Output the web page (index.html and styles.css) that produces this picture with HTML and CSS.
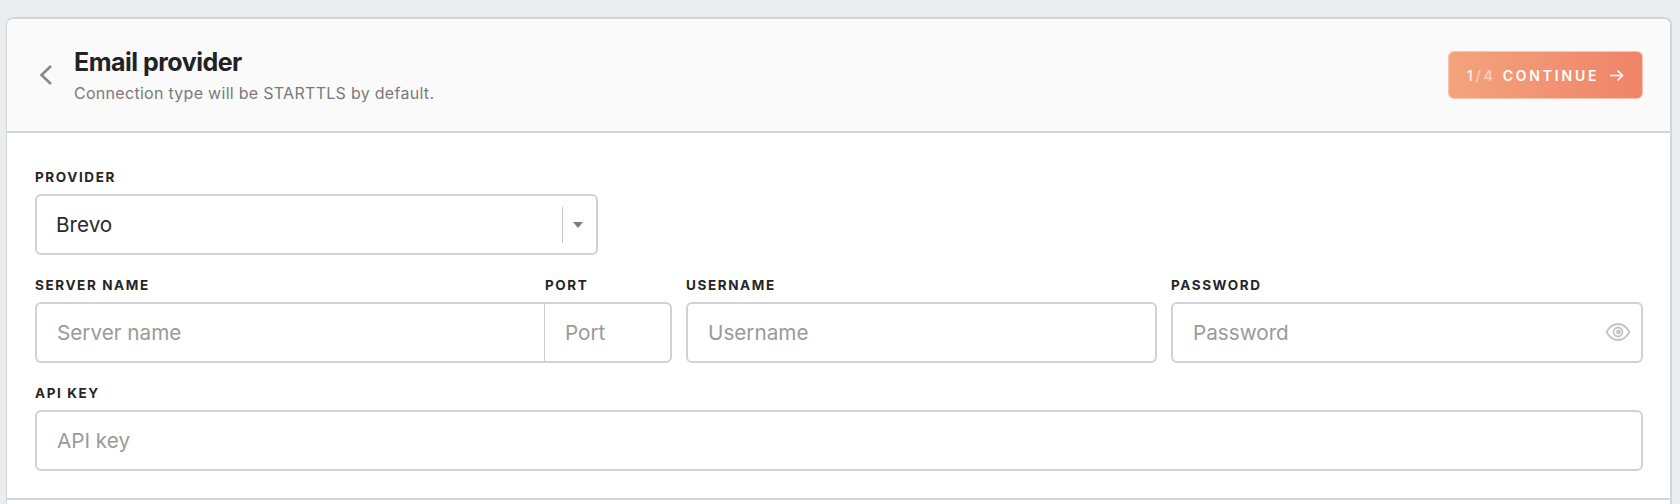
FILE: index.html
```html
<!DOCTYPE html>
<html lang="en">
<head>
<meta charset="utf-8">
<title>Email provider</title>
<link rel="stylesheet" href="styles.css">
</head>
<body>
<main class="card">
  <header class="head">
    <button class="back" type="button" aria-label="Back">
      <svg width="14" height="20" viewBox="0 0 14 20" fill="none"><path d="M12 1 L2.500 10 L12 19" stroke="#888" stroke-width="2.600"/></svg>
    </button>
    <div class="titles">
      <h1 class="title">Email provider</h1>
      <p class="sub">Connection type will be STARTTLS by default.</p>
    </div>
    <button class="cta" type="button">
      <span class="step">1<span class="dim">/4</span></span>
      <span class="cta-text">CONTINUE</span>
      <svg class="arrow" width="15" height="13" viewBox="0 0 15 13" fill="none"><path d="M1 6.500H13.500M8.500 1.500 13.500 6.500 8.500 11.500" stroke="#fff" stroke-width="1.600"/></svg>
    </button>
  </header>
  <form class="form">
    <div class="field provider">
      <label class="label">PROVIDER</label>
      <div class="box select">
        <span class="value">Brevo</span>
        <span class="sep"></span>
        <span class="caret"></span>
      </div>
    </div>
    <div class="row">
      <div class="pair">
        <div class="field">
          <label class="label">SERVER NAME</label>
          <input class="box input joined-l" placeholder="Server name">
        </div>
        <div class="field">
          <label class="label port-label">PORT</label>
          <input class="box input joined-r" placeholder="Port">
        </div>
      </div>
      <div class="field">
        <label class="label">USERNAME</label>
        <input class="box input" placeholder="Username">
      </div>
      <div class="field">
        <label class="label">PASSWORD</label>
        <div class="pw">
          <input class="box input" placeholder="Password">
          <svg class="eye" width="26" height="20" viewBox="0 0 26 20" fill="none"><path d="M1.500 10C4.500 4.800 8.500 2 13 2s8.500 2.800 11.500 8C21.500 15.200 17.500 18 13 18S4.500 15.200 1.500 10Z" stroke="#c4c4c4" stroke-width="1.800"/><circle cx="13" cy="10" r="4.500" stroke="#c4c4c4" stroke-width="1.800"/><circle cx="13.500" cy="10" r="2.400" fill="#c4c4c4"/></svg>
        </div>
      </div>
    </div>
    <div class="field">
      <label class="label">API KEY</label>
      <input class="box input" placeholder="API key">
    </div>
  </form>
  <div class="rule"></div>
</main>
</body>
</html>
```
FILE: styles.css
```css
* { box-sizing: border-box; }
html, body { margin: 0; height: 504px; overflow: hidden; }
body {
  background: #e9edf0;
  padding: 17px 8px 0 6px;
  font-family: Inter, "Liberation Sans", sans-serif;
  color: #222;
}
.card {
  background: #fff;
  border: solid #d3d5d7;
  border-width: 2px 2px 0 1px;
  border-radius: 8px 8px 0 0;
  height: 487px;
}
.head {
  display: flex;
  align-items: center;
  height: 114px;
  padding: 0 27px 0 32px;
  background: #fafafa;
  border-bottom: 2px solid #d4d5d6;
  border-radius: 6px 6px 0 0;
}
.back { width: 14px; height: 20px; padding: 0; border: 0; background: none; display: flex; margin-right: 21px; }
.titles { flex: 1; }
.title { margin: 0; font-size: 25px; line-height: 30px; font-weight: 700; letter-spacing: -0.5px; color: #222; }
.sub { margin: 5px 0 0; font-size: 16px; line-height: 22px; color: #7a7a7a; letter-spacing: 0.29px; }
.cta {
  width: 195px;
  height: 48px;
  display: flex;
  align-items: center;
  justify-content: center;
  gap: 7px;
  padding: 1px 0 0;
  border: 1px solid #f6c3ae;
  border-radius: 6px;
  background: linear-gradient(90deg, #f3a47c, #f08369);
  color: #fff;
  font: 600 14px Inter, "Liberation Sans", sans-serif;
  letter-spacing: 2.800px;
  margin-top: -1px;
}
.step { opacity: .8; }
.dim { opacity: .6; }
.arrow { margin-left: 3px; }
.form { display: flex; flex-direction: column; gap: 22px; padding: 36px 27px 0 28px; }
.field { display: flex; flex-direction: column; min-width: 0; }
.provider { width: 563px; }
.label { font-size: 13.500px; line-height: 16px; font-weight: 700; letter-spacing: 1.600px; color: #262626; margin-bottom: 9px; }
.port-label { margin-left: 1px; }
.box {
  width: 100%;
  height: 61px;
  border: 2px solid #d2d2d2;
  border-radius: 6px;
  background: #fff;
  font: 20.700px Inter, "Liberation Sans", sans-serif;
}
.input { display: block; padding: 0 20px; color: #222; outline: none; }
.input::placeholder { color: #9a9a9a; opacity: 1; }
.select { display: flex; align-items: center; padding: 0 13px 0 19px; color: #2a2a2a; }
.value { flex: 1; }
.sep { width: 1px; height: 36px; background: #c4c4c4; margin-right: 10px; }
.caret { width: 0; height: 0; border: 5.500px solid transparent; border-top: 6px solid #7d7d7d; border-bottom: 0; }
.row { display: grid; grid-template-columns: 637px 471px 472px; column-gap: 14px; }
.pair { display: grid; grid-template-columns: 509px 128px; }
.joined-l { border-right: 0; border-radius: 6px 0 0 6px; }
.joined-r { border-left: 1px solid #d2d2d2; border-radius: 0 6px 6px 0; padding-left: 20px; }
.pw { position: relative; }
.eye { position: absolute; right: 12px; top: 20px; }
.rule { height: 2px; background: #d4d5d6; margin-top: 27px; }
```
